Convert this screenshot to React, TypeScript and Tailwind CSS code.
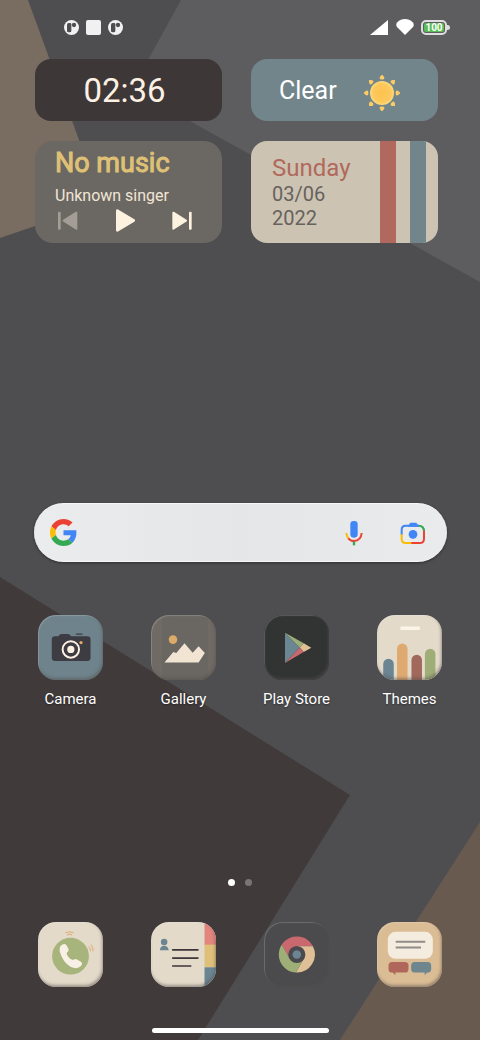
import React from 'react';
import { clsx } from 'clsx';

const PETALS = [0, 45, 90, 135, 180, 225, 270, 315];

function Wallpaper() {
  return (
    <svg
      className="absolute inset-0 w-full h-full"
      viewBox="0 0 480 1040"
      preserveAspectRatio="none"
      aria-hidden="true"
    >
      <polygon points="0,0 28,0 102,203 0,238" fill="#796c61" />
      <polygon points="181,0 480,0 480,282 132,89" fill="#5d5d5f" />
      <polygon points="0,577 350,795 198,1040 0,1040" fill="#413a3a" />
      <polygon points="480,822 480,1040 340,1040" fill="#695a50" />
    </svg>
  );
}

function NotificationIcon() {
  return (
    <svg className="w-[15px] h-[15px]" viewBox="0 0 45 45" aria-hidden="true">
      <circle cx="22.5" cy="22.5" r="22.5" fill="#f1f1f1" />
      <path
        d="M9 14Q9 9 14 9H18Q22 9 22 13V32Q22 37 17 37H14Q9 37 9 32Z"
        fill="#4e4e50"
      />
      <circle cx="30" cy="15" r="6.500" fill="#4e4e50" />
    </svg>
  );
}

function StatusBar() {
  return (
    <header className="flex items-center justify-between pl-16 pr-[30px] pt-[19px]">
      <div className="flex items-center gap-[7px]">
        <NotificationIcon />
        <span className="w-[15px] h-[15px] rounded-xs bg-[#f1f1f1]" />
        <NotificationIcon />
      </div>
      <div className="flex items-center">
        <svg className="w-[18px] h-[15px]" viewBox="0 0 18 15" aria-hidden="true">
          <path d="M0 15L18 0V15Z" fill="#fff" />
        </svg>
        <svg className="w-[18px] h-[16px] ml-2" viewBox="0 0 54 48" aria-hidden="true">
          <path d="M27 48L3 24Q-2 17 4 10Q14 0 27 0T50 10Q56 17 51 24Z" fill="#fff" />
        </svg>
        <div className="flex items-center ml-[7px]">
          <span className="flex w-[26px] h-[15px] rounded-[5px] border-2 border-[#dedede] p-px">
            <span className="flex flex-1 items-center justify-center rounded-[2px] bg-[#57bd54] text-[10px] leading-[11px] font-bold text-white">
              100
            </span>
          </span>
          <span className="w-[3px] h-[5px] rounded-r-full bg-[#dedede]" />
        </div>
      </div>
    </header>
  );
}

function SunIcon() {
  return (
    <svg className="w-10 h-10" viewBox="-20 -22 40 40" aria-hidden="true">
      <defs>
        <radialGradient id="sun">
          <stop offset="0" stopColor="#fcc24f" />
          <stop offset="0.75" stopColor="#fdc95c" />
          <stop offset="1" stopColor="#fedb7d" />
        </radialGradient>
      </defs>
      <circle r="12" fill="url(#sun)" />
      {PETALS.map((angle) => (
        <path
          key={angle}
          d="M0 -18.3C0.8 -17.8 2.6 -15.8 2.4 -14.8Q2.2 -13.4 0 -13.6Q-2.2 -13.4 -2.4 -14.8C-2.6 -15.8 -0.8 -17.8 0 -18.3Z"
          fill="#fccb66"
          transform={`rotate(${angle})`}
        />
      ))}
    </svg>
  );
}

function MusicWidget() {
  return (
    <section className="h-[102px] rounded-[18px] bg-[#6b6762] px-5 pt-[6px]">
      <h2 className="text-[27px] leading-8 font-normal text-[#dfc176] [-webkit-text-stroke:1px_#dfc176]">No music</h2>
      <p className="mt-[7px] text-[16px] leading-5 text-[#f0e6d6]">Unknown singer</p>
      <div className="mt-[3px] flex items-center justify-between pl-[3px] pr-[10px]">
        <button type="button" aria-label="Previous">
          <svg className="w-5 h-[23px]" viewBox="0 0 60 69">
            <rect x="0" y="8" width="8" height="54" rx="3" fill="#a49d95" />
            <path d="M17 35L55 11V59Z" fill="#a49d95" stroke="#a49d95" strokeWidth="6" strokeLinejoin="round" />
          </svg>
        </button>
        <button type="button" aria-label="Play">
          <svg className="w-5 h-[23px]" viewBox="0 0 60 69">
            <path d="M7 5L56 34.500L7 64Z" fill="#fdf1df" stroke="#fdf1df" strokeWidth="8" strokeLinejoin="round" />
          </svg>
        </button>
        <button type="button" aria-label="Next">
          <svg className="w-5 h-[23px]" viewBox="0 0 60 69">
            <path d="M4 11L42 35L4 59Z" fill="#fdf1df" stroke="#fdf1df" strokeWidth="6" strokeLinejoin="round" />
            <rect x="51" y="8" width="8" height="54" rx="3" fill="#fdf1df" />
          </svg>
        </button>
      </div>
    </section>
  );
}

function DateWidget() {
  return (
    <section className="flex h-[102px] overflow-hidden rounded-[16px] bg-[#cdc3b2]">
      <div className="flex-1 pl-[21px] pt-[14px] text-[20px] leading-6 text-[#66625e]">
        <p className="text-[24px] leading-[27px] text-[#b0695c]">Sunday</p>
        <p>03/06</p>
        <p>2022</p>
      </div>
      <div className="w-4 bg-[#b0695c]" />
      <div className="ml-[14px] mr-3 w-4 bg-[#71858b]" />
    </section>
  );
}

function GoogleLogo() {
  return (
    <svg className="w-[27px] h-[27px]" viewBox="0 0 48 48" aria-hidden="true">
      <path fill="#ea4335" d="M24 9.500c3.540 0 6.710 1.220 9.210 3.600l6.850-6.850C35.900 2.380 30.470 0 24 0 14.620 0 6.510 5.380 2.560 13.220l7.980 6.190C12.430 13.720 17.740 9.500 24 9.500z" />
      <path fill="#4285f4" d="M46.980 24.550c0-1.570-.15-3.090-.38-4.550H24v9.020h12.940c-.58 2.960-2.260 5.480-4.780 7.180l7.730 6c4.510-4.180 7.090-10.360 7.090-17.650z" />
      <path fill="#fbbc05" d="M10.530 28.590c-.48-1.450-.76-2.990-.76-4.590s.27-3.140.76-4.590l-7.980-6.190C.92 16.460 0 20.120 0 24c0 3.880.92 7.540 2.560 10.780l7.970-6.190z" />
      <path fill="#34a853" d="M24 48c6.480 0 11.930-2.130 15.890-5.810l-7.730-6c-2.150 1.450-4.920 2.300-8.160 2.300-6.260 0-11.570-4.220-13.470-9.910l-7.980 6.190C6.510 42.620 14.620 48 24 48z" />
    </svg>
  );
}

function SearchBar() {
  return (
    <form className="mt-[260px] ml-[34px] mr-[33px] flex h-[59px] items-center rounded-full border-y border-[#f6f7f9] bg-linear-to-r from-[#ebecee] via-[#e4e6e8] to-[#e9ebed] pl-4 pr-[21px] shadow-[0_1px_3px_rgba(0,0,0,0.4)]">
      <GoogleLogo />
      <input type="search" aria-label="Search" className="min-w-0 flex-1 h-10 bg-transparent px-3 text-base text-[#3c4043] outline-none" />
      <button type="button" aria-label="Voice search">
        <svg className="w-[18px] h-[26px]" viewBox="0 0 54 78">
          <rect x="16" y="3" width="22" height="50" rx="10" fill="#4285f4" />
          <path d="M4 39Q5 50 11 56" stroke="#fbbc05" strokeWidth="6" fill="none" />
          <path d="M10 55Q16 63 27 63Q48 62 50 39" stroke="#ea4335" strokeWidth="6" fill="none" />
          <path d="M27 65V76" stroke="#34a853" strokeWidth="7" />
        </svg>
      </button>
      <button type="button" aria-label="Search with camera" className="ml-[37px]">
        <svg className="w-[26px] h-[26px]" viewBox="0 0 78 78" fill="none" strokeWidth="6">
          <path d="M5 44V29Q5 17 17 17H57" stroke="#4285f4" />
          <path d="M24 18L31 8H49L58 20H24Z" fill="#4285f4" />
          <path d="M56 17Q72 17 72 34" stroke="#34a853" />
          <path d="M72 32V56Q72 69 59 69H33" stroke="#ea4335" />
          <path d="M5 43V57Q5 69 17 69H34" stroke="#fbbc05" />
          <circle cx="39" cy="43" r="13" fill="#4285f4" />
        </svg>
      </button>
    </form>
  );
}

type App = {
  name: string;
  tile: string;
  art: React.ReactNode;
};

const HOME_APPS: App[] = [
  {
    name: 'Camera',
    tile: 'bg-[#6e838b]',
    art: (
      <>
        <rect x="42" y="65" width="118" height="75" rx="10" fill="#3d3c42" />
        <path d="M60 67Q66 57 72 58H92Q98 58 102 67Z" fill="#3d3c42" />
        <path d="M117 58H134" stroke="#3d3c42" strokeWidth="4" strokeLinecap="round" />
        <circle cx="100" cy="105" r="25" fill="none" stroke="#fbf0e3" strokeWidth="6" />
        <circle cx="100" cy="105" r="11" fill="#fbf0e3" />
        <circle cx="131" cy="84" r="5" fill="#dfa86d" />
      </>
    ),
  },
  {
    name: 'Gallery',
    tile: 'bg-[#706a65]',
    art: (
      <>
        <rect x="34" width="138" height="198" fill="#6a6661" />
        <circle cx="67" cy="75" r="13" fill="#dcaa69" />
        <path d="M41 145L68 113L77 116L102 86L127 115L145 95L164 116L145 145Z" fill="#f1e4d3" />
      </>
    ),
  },
  {
    name: 'Play Store',
    tile: 'bg-[#313433]',
    art: (
      <>
        <path d="M64 54L109 99L64 146Z" fill="#6b8592" />
        <path d="M64 54L121 86L109 99Z" fill="#9dae77" />
        <path d="M121 86L144 100L121 113L109 99Z" fill="#e0bf94" />
        <path d="M64 146L121 113L109 99Z" fill="#c9686e" />
      </>
    ),
  },
  {
    name: 'Themes',
    tile: 'bg-[#e3daca]',
    art: (
      <>
        <rect x="71" y="35" width="60" height="11" rx="4" fill="#fbf4e7" />
        <rect x="19" y="133" width="32" height="90" rx="16" fill="#6b8592" />
        <rect x="61" y="87" width="32" height="130" rx="16" fill="#dfaa70" />
        <rect x="105" y="121" width="32" height="100" rx="16" fill="#a0695b" />
        <rect x="146" y="103" width="32" height="120" rx="16" fill="#9fae77" />
      </>
    ),
  },
];

const DOCK_APPS: App[] = [
  {
    name: 'Phone',
    tile: 'bg-[#e3daca]',
    art: (
      <>
        <circle cx="99" cy="104" r="56" fill="#a7b47b" />
        <path
          d="M69 72Q80 62 87 71L93 82Q95 88 88 93Q86 98 91 104Q98 115 107 116Q113 110 119 114L132 122Q137 127 131 134Q119 146 99 136Q75 122 66 89Q65 77 69 72Z"
          fill="#f8f0e4"
        />
        <g fill="none" stroke="#dfa86d" strokeWidth="3" strokeLinecap="round">
          <path d="M85 32Q96 28 107 32M89 39Q96 35 103 39" />
          <path d="M155 76Q161 81 160 88M162 70Q169 78 168 88" />
        </g>
      </>
    ),
  },
  {
    name: 'Contacts',
    tile: 'bg-[#e3daca]',
    art: (
      <>
        <rect x="163" y="0" width="35" height="70" fill="#e1857d" />
        <rect x="163" y="69" width="35" height="69" fill="#dfc07a" />
        <rect x="163" y="138" width="35" height="60" fill="#6b8592" />
        <circle cx="40" cy="61" r="10" fill="#6b8592" />
        <path d="M27 86Q28 72 40 72T54 86Z" fill="#6b8592" />
        <path d="M66 85H143M66 110H143M66 134H121" stroke="#3e3539" strokeWidth="5" strokeLinecap="round" />
      </>
    ),
  },
  {
    name: 'Chrome',
    tile: 'bg-[#4b4b4d]',
    art: (
      <>
        <path d="M53.900 69.100A55 55 0 0 1 149 74H100L78.400 111.500Z" fill="#c9686e" />
        <path d="M100 74H149A55 55 0 0 1 97.100 153.900L121.600 111.500Z" fill="#dfbf96" />
        <path d="M53.900 69.100L78.400 111.500H121.600L97.100 153.900A55 55 0 0 1 53.900 69.100Z" fill="#9dae77" />
        <circle cx="100" cy="99" r="26" fill="#4a494e" />
        <circle cx="100" cy="99" r="13" fill="#6b8592" />
      </>
    ),
  },
  {
    name: 'Messages',
    tile: 'bg-[#dbbd95]',
    art: (
      <>
        <rect x="33" y="30" width="137" height="82" rx="24" fill="#f5ece0" />
        <path d="M57 60H147M57 78H134" stroke="#918c87" strokeWidth="6" />
        <rect x="35" y="122" width="61" height="32" rx="11" fill="#b0665b" />
        <path d="M47 152L56 162L56 152Z" fill="#b0665b" />
        <rect x="104" y="122" width="61" height="32" rx="11" fill="#6f868f" />
        <path d="M145 152L145 162L154 152Z" fill="#6f868f" />
      </>
    ),
  },
];

function AppTile({ app, showLabel }: { app: App; showLabel?: boolean }) {
  return (
    <button type="button" aria-label={app.name} className="flex flex-col items-center">
      <span className={clsx('relative block w-[65px] h-[65px] overflow-hidden rounded-[18px]', app.tile)}>
        <svg className="w-full h-full" viewBox="0 0 198 198" aria-hidden="true">
          {app.art}
        </svg>
        <span className="absolute inset-0 rounded-[18px] shadow-[inset_1px_1px_1px_rgba(255,255,255,0.2),inset_-1px_-2px_3px_rgba(85,80,78,0.5)]" />
      </span>
      {showLabel && (
        <span className="mt-[9px] text-[15px] leading-5 text-white [text-shadow:0_1px_2px_rgba(0,0,0,0.4)]">
          {app.name}
        </span>
      )}
    </button>
  );
}

export default function App() {
  return (
    <div className="relative min-h-screen overflow-hidden bg-[#4e4e50] font-['Roboto',sans-serif]">
      <Wallpaper />
      <main className="relative flex min-h-screen flex-col">
        <StatusBar />

        <div className="mt-6 grid grid-cols-2 gap-x-[29px] gap-y-5 pl-[35px] pr-[42px]">
          <section className="flex h-[62px] items-center justify-center rounded-[16px] bg-[#3e3737] pr-2 pt-[2px]">
            <time className="text-[33px] leading-10 text-[#fdf1e3]">02:36</time>
          </section>
          <section className="flex h-[62px] items-center justify-between rounded-[16px] bg-[#71858b] pl-7 pr-9 pt-[2px]">
            <span className="text-[25px] leading-8 text-white">Clear</span>
            <SunIcon />
          </section>
          <MusicWidget />
          <DateWidget />
        </div>

        <SearchBar />

        <nav aria-label="Apps" className="mt-[53px] grid grid-cols-4 px-3.5">
          {HOME_APPS.map((app) => (
            <AppTile key={app.name} app={app} showLabel />
          ))}
        </nav>

        {/* Page indicator */}
        <div className="mt-auto flex justify-center gap-[10px] pt-10">
          <button type="button" aria-label="Page 1" className="w-[7px] h-[7px] rounded-full bg-white" />
          <button type="button" aria-label="Page 2" className="w-[7px] h-[7px] rounded-full bg-[#7a7575]" />
        </div>

        <nav aria-label="Dock" className="mt-9 grid grid-cols-4 px-3.5">
          {DOCK_APPS.map((app) => (
            <AppTile key={app.name} app={app} />
          ))}
        </nav>

        <div className="mx-auto mt-[41px] mb-[7px] h-[5px] w-[177px] rounded-full bg-white" />
      </main>
    </div>
  );
}
